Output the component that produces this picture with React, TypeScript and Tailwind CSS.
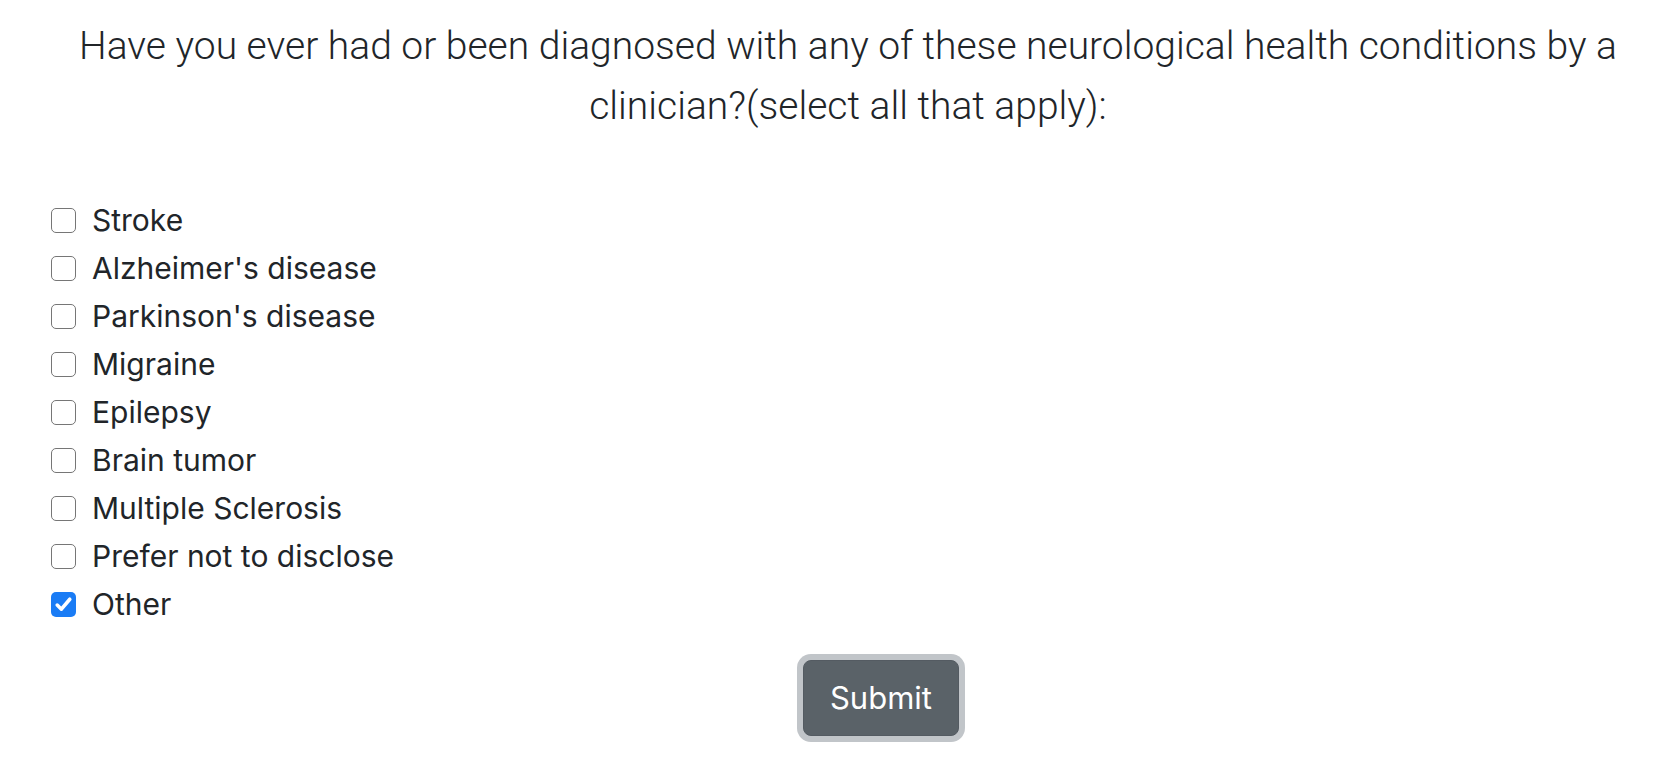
import { useState } from 'react';

const CONDITIONS = [
  'Stroke',
  "Alzheimer's disease",
  "Parkinson's disease",
  'Migraine',
  'Epilepsy',
  'Brain tumor',
  'Multiple Sclerosis',
  'Prefer not to disclose',
  'Other',
];

function Box({ checked }: { checked: boolean }) {
  if (checked) {
    return (
      <span className="w-[25px] h-[25px] rounded-[5px] bg-[#1a7cf5] flex items-center justify-center shrink-0">
        <svg width="21" height="21" viewBox="0 0 20 20" fill="none">
          <path d="M4 10.5l4 4 8-9.5" stroke="white" strokeWidth="3.4" strokeLinecap="round" strokeLinejoin="round" />
        </svg>
      </span>
    );
  }
  return <span className="w-[25px] h-[25px] rounded-[5px] border-[1.5px] border-[#767676] bg-white shrink-0" />;
}

export default function App() {
  const [checked, setChecked] = useState<Record<string, boolean>>({ Other: true });

  return (
    <div className="min-h-[774px] bg-white text-[#212529] font-['Inter',sans-serif]">
      <div className="pt-[16px] pl-[34px] text-center font-['Roboto',sans-serif]">
        <p className="text-[39px] leading-[60px] font-light whitespace-nowrap">
          Have you ever had or been diagnosed with any of these neurological health conditions by a
        </p>
        <p className="text-[39px] leading-[60px] font-light whitespace-nowrap">clinician?(select all that apply):</p>
      </div>

      <div className="mt-[60px] pl-[51px] flex flex-col">
        {CONDITIONS.map((c) => (
          <label
            key={c}
            className="h-[48px] flex items-center gap-[16px] cursor-pointer text-[30px]"
            onClick={() => setChecked((s) => ({ ...s, [c]: !s[c] }))}
          >
            <Box checked={!!checked[c]} />
            <span>{c}</span>
          </label>
        ))}
      </div>

      <div className="mt-[32px] pl-[100px] flex justify-center">
        <button className="h-[76px] px-[26px] rounded-[8px] bg-[#5a6268] border border-[#545b62] text-white text-[31px] leading-[48px] ring-[6px] ring-[#c1c5c9]">
          Submit
        </button>
      </div>
    </div>
  );
}
